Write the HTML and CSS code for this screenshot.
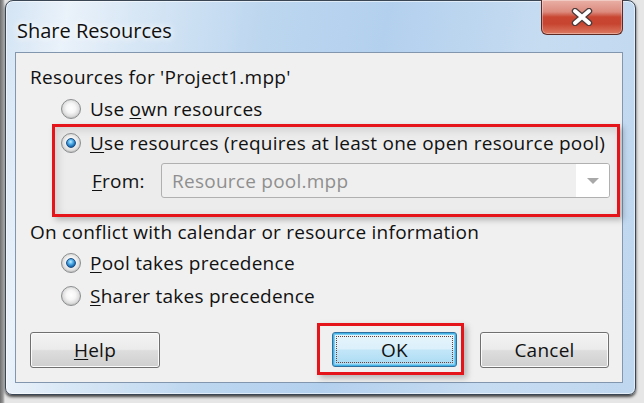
FILE: index.html
```html
<!DOCTYPE html>
<html>
<head>
<meta charset="utf-8">
<link rel="stylesheet" href="styles.css">
</head>
<body>
<div class="window">
  <div class="titlebar">
    <span class="title">Share Resources</span>
    <div class="close">
      <svg width="24" height="18" viewBox="0 0 24 18">
        <path d="M5 3 L19 15 M19 3 L5 15" stroke="#4a3a3a" stroke-width="6.4" stroke-linecap="round"/>
        <path d="M5 3 L19 15 M19 3 L5 15" stroke="#ffffff" stroke-width="4" stroke-linecap="round"/>
      </svg>
    </div>
  </div>
  <div class="client">
    <div class="heading">Resources for 'Project1.mpp'</div>
    <div class="radio-row r1"><span class="radio"></span><span>Use <u>o</u>wn resources</span></div>
    <div class="highlight">
      <div class="radio-row inbox"><span class="radio checked"></span><span><u>U</u>se resources (requires at least one open resource pool)</span></div>
      <div class="from-row">
        <span class="from-label"><u>F</u>rom:</span>
        <div class="combo">
          <span class="combo-text">Resource pool.mpp</span>
          <span class="combo-btn"><svg width="14" height="8" viewBox="0 0 14 8"><path d="M1 1 L13 1 L7 7 Z" fill="#a8a8a8"/></svg></span>
        </div>
      </div>
    </div>
    <div class="heading h2">On conflict with calendar or resource information</div>
    <div class="radio-row r3"><span class="radio checked"></span><span><u>P</u>ool takes precedence</span></div>
    <div class="radio-row r4"><span class="radio"></span><span><u>S</u>harer takes precedence</span></div>
    <div class="buttons">
      <div class="btn help"><span><u>H</u>elp</span></div>
      <div class="ok-wrap">
        <div class="btn ok"><span>OK</span></div>
        <span class="ok-mark"></span>
      </div>
      <div class="btn cancel"><span>Cancel</span></div>
    </div>
  </div>
</div>
</body>
</html>
```

FILE: styles.css
```css
html, body {
  margin: 0;
  padding: 0;
}
body {
  width: 644px;
  height: 403px;
  overflow: hidden;
  background: linear-gradient(to right, #6d6d6d 0px, #9a9a9a 3px, #e6e6e6 5px);
  font-family: "Open Sans", "Noto Sans", "DejaVu Sans", sans-serif;
  font-size: 19px;
  letter-spacing: 0.25px;
  color: #111111;
}
.window {
  box-sizing: border-box;
  margin-left: 5px;
  width: 631px;
  height: 395px;
  border: 1px solid #3b4654;
  border-radius: 8px 8px 7px 7px;
  background: linear-gradient(100deg, #d3e4f4 0%, #eaf2fa 9%, #d6e6f5 20%, #bcd6ef 38%, #b3d0ee 55%, #c6dcf1 78%, #bfd7ef 100%);
  box-shadow: inset 0 0 0 1px rgba(255,255,255,0.55), 0 2px 3px rgba(0,0,0,0.7);
  padding: 0 12px 11px 9px;
  display: flex;
  flex-direction: column;
}
.titlebar {
  height: 51px;
  display: flex;
  justify-content: space-between;
  align-items: flex-start;
}
.title {
  padding-left: 2px;
  padding-top: 17px;
  font-size: 20px;
  letter-spacing: 0;
  line-height: 26px;
  color: #101010;
  text-shadow: 0 0 6px #ffffff, 0 0 10px #ffffff;
}
.close {
  margin-top: -1px;
  width: 82px;
  height: 35px;
  box-sizing: border-box;
  border: 1px solid #5e2a24;
  border-top: none;
  border-radius: 0 0 6px 6px;
  background: linear-gradient(#e9b0a6 0%, #dc8b7e 35%, #c84632 50%, #c64430 70%, #dd7a62 100%);
  box-shadow: inset 0 0 0 1px rgba(255,255,255,0.35);
  display: flex;
  align-items: center;
  justify-content: center;
}
.client {
  flex: 1;
  border: 1px solid #8296ad;
  background: #f0f0f0;
  padding: 12px 13px 0 14px;
  display: flex;
  flex-direction: column;
}
.heading {
  line-height: 24px;
  height: 24px;
  white-space: nowrap;
}
.h2 { margin-top: 3px; }
.radio-row {
  display: flex;
  align-items: center;
  height: 24px;
  line-height: 24px;
  margin-left: 31px;
  white-space: nowrap;
}
.radio-row .radio { margin-right: 9px; }
.r1 { margin-top: 8px; }
.r3 { margin-top: 7px; }
.r4 { margin-top: 9px; }
.radio {
  position: relative;
  flex: none;
  width: 20px;
  height: 20px;
  box-sizing: border-box;
  border-radius: 50%;
  border: 1px solid #8b8d8f;
  background: radial-gradient(circle at 50% 45%, #ffffff 0%, #f6f6f6 35%, #dcdcdc 62%, #c6c6c6 70%, #f2f2f2 90%);
}
.radio.checked::after {
  content: "";
  position: absolute;
  left: 4px;
  top: 4px;
  width: 10px;
  height: 10px;
  box-sizing: border-box;
  border-radius: 50%;
  border: 1px solid #1b4f86;
  background: radial-gradient(circle at 45% 35%, #c8ecff 0%, #5db8ee 30%, #1f72b8 65%, #0e3f78 100%);
}
.highlight {
  margin-top: 3px;
  margin-left: 22px;
  width: 568px;
  box-sizing: border-box;
  border: 3px solid #e5141b;
  padding: 4px 0 16px 0;
  background: #ececec;
  box-shadow: inset 3px 3px 8px rgba(0,0,0,0.12), 3px 3px 6px rgba(0,0,0,0.25);
}
.radio-row.inbox { margin-left: 6px; }
.from-row {
  margin-top: 8px;
  display: flex;
  align-items: center;
  padding-left: 37px;
}
.from-label {
  line-height: 24px;
}
.combo {
  margin-left: auto;
  margin-right: 7px;
  width: 449px;
  height: 35px;
  box-sizing: border-box;
  border: 1px solid #b0b0b0;
  border-radius: 3px;
  background: #efefef;
  display: flex;
  align-items: center;
  overflow: hidden;
}
.combo-text {
  flex: 1;
  padding-left: 10px;
  color: #8f8f8f;
  white-space: nowrap;
}
.combo-btn {
  width: 33px;
  height: 100%;
  background: #ffffff;
  display: flex;
  align-items: center;
  justify-content: center;
}
.buttons {
  margin-top: 24px;
  display: flex;
  align-items: flex-start;
}
.btn {
  box-sizing: border-box;
  height: 36px;
  border: 1px solid #707070;
  border-radius: 3px;
  background: linear-gradient(#f3f3f3 0%, #ebebeb 48%, #dddddd 52%, #cfcfcf 100%);
  box-shadow: inset 0 0 0 1px #fbfbfb;
  display: flex;
  align-items: center;
  justify-content: center;
  line-height: 24px;
}
.help { width: 130px; }
.ok-wrap {
  position: relative;
  margin-left: auto;
}
.ok {
  position: relative;
  width: 125px;
  height: 35px;
  border-color: #2f6f9f;
  background: linear-gradient(#e8f5fc 0%, #dbf0fb 48%, #c2e6f8 52%, #a9daf3 100%);
  box-shadow: inset 0 0 0 1px #45b3e6, inset 0 0 0 2px #7ccdf1;
}
.ok::after {
  content: "";
  position: absolute;
  left: 3px;
  top: 3px;
  right: 3px;
  bottom: 3px;
  border: 1px dotted #6a4036;
  border-radius: 1px;
}
.ok-mark {
  position: absolute;
  left: -15px;
  top: -9px;
  width: 147px;
  height: 52px;
  box-sizing: border-box;
  border: 3px solid #e5141b;
  box-shadow: 3px 3px 6px rgba(0,0,0,0.25);
  pointer-events: none;
}
.cancel {
  width: 129px;
  margin-left: 23px;
}
u {
  text-decoration: underline;
  text-underline-offset: 2px;
}
```
